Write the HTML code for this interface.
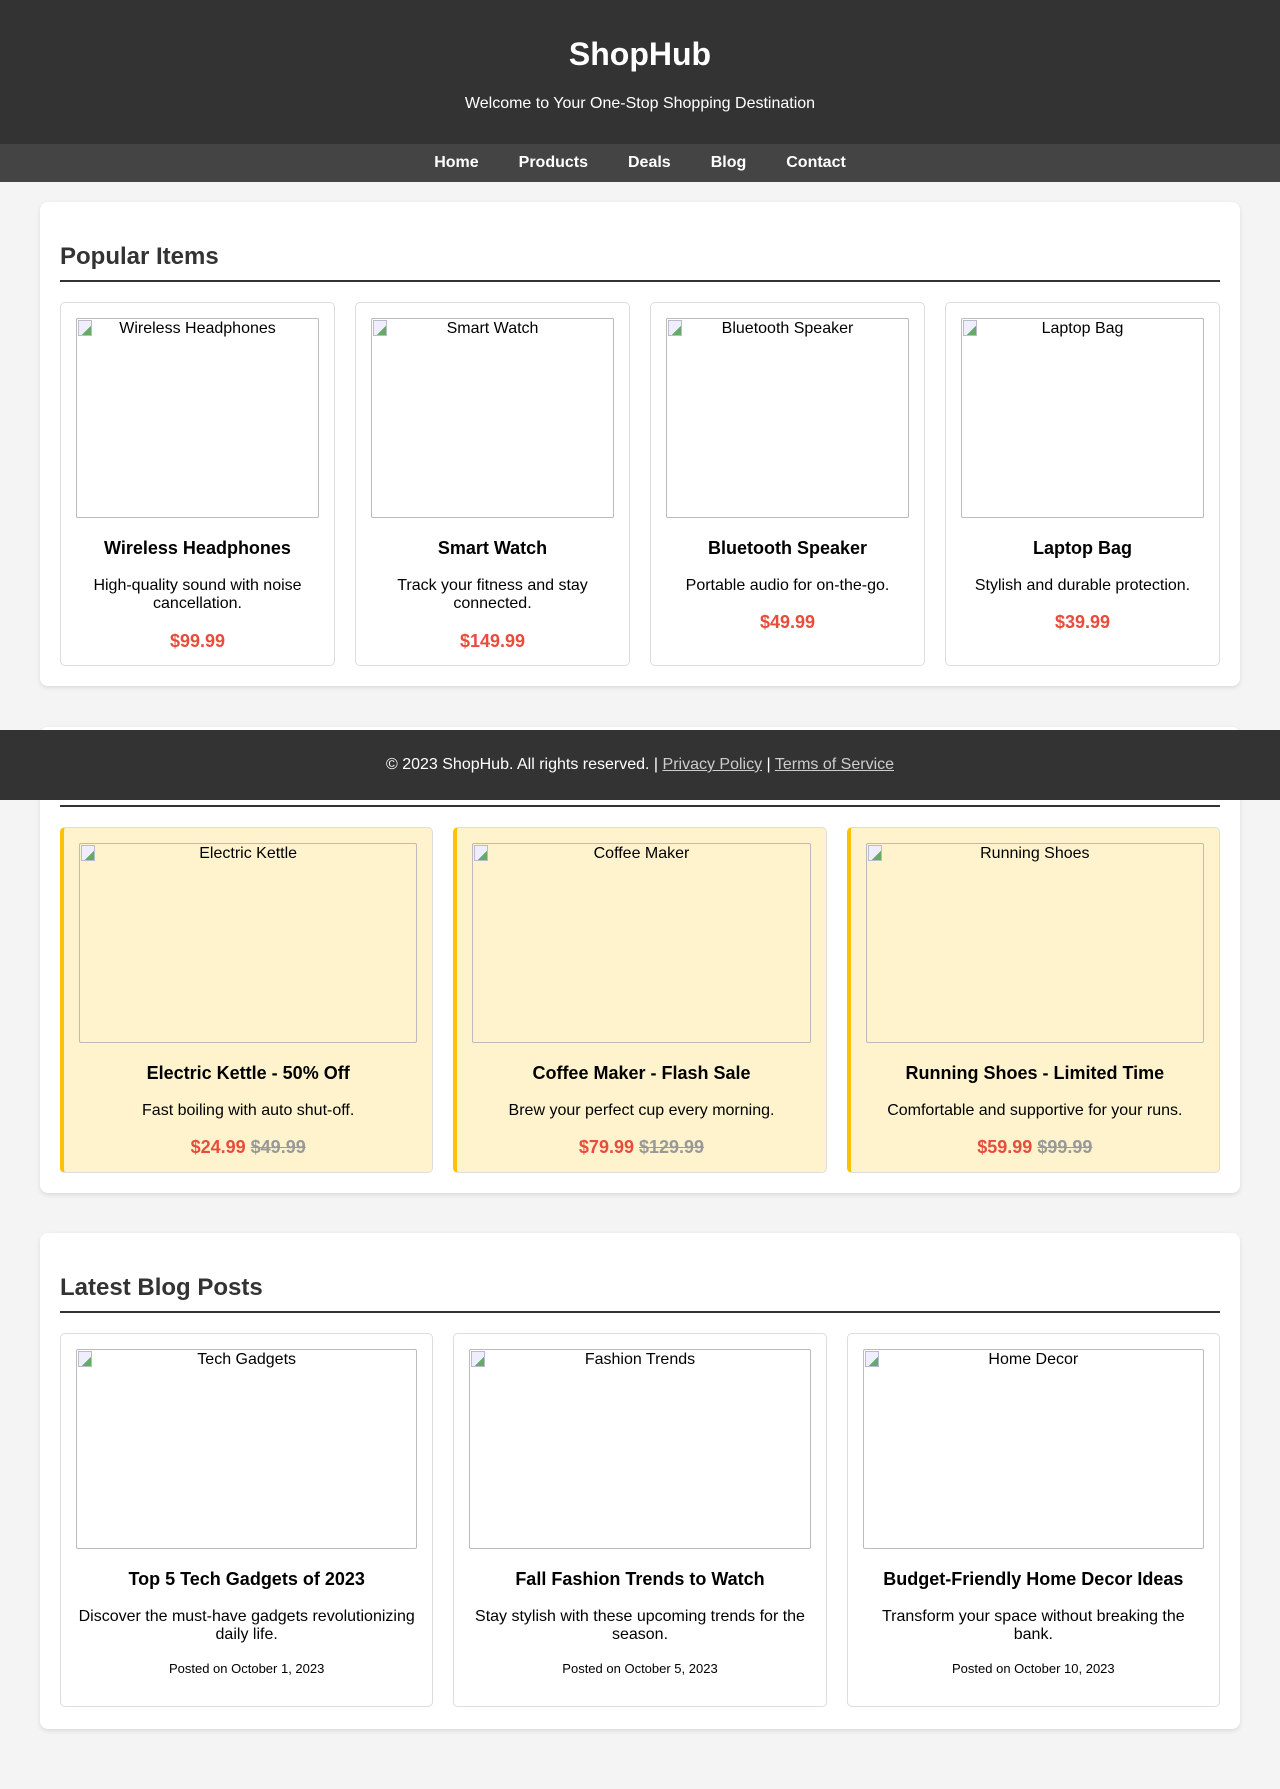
<!DOCTYPE html>
<html><head><meta charset="utf-8"><style>
*{box-sizing:border-box}
body{margin:0;background:#f4f4f4;font-family:"Liberation Sans",Arial,sans-serif;color:#000;height:1789px;position:relative}
header{background:#333;color:#fff;text-align:center;height:144px;padding-top:36px}
header h1{margin:0;font-size:32px;line-height:37px}
header p{margin:22px 0 0;font-size:16px;line-height:18px}
nav{background:#444;height:38px;text-align:center;padding-top:10px}
nav a{color:#fff;font-weight:bold;text-decoration:none;font-size:16px;line-height:18px;margin:0 20px}
.sec{position:absolute;left:40px;width:1200px;background:#fff;border-radius:8px;box-shadow:0 2px 5px rgba(0,0,0,.1);padding:20px}
.sec h2{margin:21px 0 0;font-size:24px;line-height:28px;color:#333;padding-bottom:9px;border-bottom:2px solid #333}
.grid{display:grid;gap:20px;margin-top:20px}
.card{border:1px solid #ddd;border-radius:5px;padding:15px;text-align:center;background:#fff;overflow:hidden}
.img{height:200px;border:1px solid #bbb;border-radius:2px;font-size:16px;line-height:18px;padding-top:1px;position:relative}
.img:before{content:"";position:absolute;left:1px;top:1px;width:12px;height:14px;border:1px solid #bbc;background:linear-gradient(135deg,#eef 65%,#6a6 65%)}
.card h3{margin:20px 0 0;font-size:18px;line-height:21px}
.card .d{margin:18px 0 0;font-size:16px;line-height:18.4px}
.card .p{margin:17px 0 0;font-size:18px;line-height:21px;font-weight:bold;color:#e74c3c}
.card .p s{color:#999}
.deal{background:#fff3cd;border-left:4px solid #ffc107}
.date{font-size:13px;margin:16px 0 0;line-height:15px}
footer{position:absolute;top:730px;left:0;width:1280px;height:70px;background:#333;color:#fff;text-align:center;font-size:16px;line-height:18px;padding-top:26px}
footer a{color:#ccc;text-decoration:underline}
.g1 .card{height:364px}.g2 .card{height:346px}.g3 .card{height:374px}
</style></head><body>
<header><h1>ShopHub</h1><p>Welcome to Your One-Stop Shopping Destination</p></header>
<nav><a>Home</a><a>Products</a><a>Deals</a><a>Blog</a><a>Contact</a></nav>

<div class="sec" style="top:202px;height:484px">
<h2>Popular Items</h2>
<div class="grid g1" style="grid-template-columns:repeat(4,1fr)">
<div class="card"><div class="img">Wireless Headphones</div><h3>Wireless Headphones</h3><p class="d">High-quality sound with noise cancellation.</p><p class="p">$99.99</p></div>
<div class="card"><div class="img">Smart Watch</div><h3>Smart Watch</h3><p class="d">Track your fitness and stay connected.</p><p class="p">$149.99</p></div>
<div class="card"><div class="img">Bluetooth Speaker</div><h3>Bluetooth Speaker</h3><p class="d">Portable audio for on-the-go.</p><p class="p">$49.99</p></div>
<div class="card"><div class="img">Laptop Bag</div><h3>Laptop Bag</h3><p class="d">Stylish and durable protection.</p><p class="p">$39.99</p></div>
</div></div>

<div class="sec" style="top:727px;height:466px">
<h2>Hot Deals</h2>
<div class="grid g2" style="grid-template-columns:repeat(3,1fr)">
<div class="card deal"><div class="img">Electric Kettle</div><h3>Electric Kettle - 50% Off</h3><p class="d">Fast boiling with auto shut-off.</p><p class="p">$24.99 <s>$49.99</s></p></div>
<div class="card deal"><div class="img">Coffee Maker</div><h3>Coffee Maker - Flash Sale</h3><p class="d">Brew your perfect cup every morning.</p><p class="p">$79.99 <s>$129.99</s></p></div>
<div class="card deal"><div class="img">Running Shoes</div><h3>Running Shoes - Limited Time</h3><p class="d">Comfortable and supportive for your runs.</p><p class="p">$59.99 <s>$99.99</s></p></div>
</div></div>

<div class="sec" style="top:1233px;height:496px">
<h2>Latest Blog Posts</h2>
<div class="grid g3" style="grid-template-columns:repeat(3,1fr)">
<div class="card"><div class="img">Tech Gadgets</div><h3>Top 5 Tech Gadgets of 2023</h3><p class="d">Discover the must-have gadgets revolutionizing daily life.</p><p class="date">Posted on October 1, 2023</p></div>
<div class="card"><div class="img">Fashion Trends</div><h3>Fall Fashion Trends to Watch</h3><p class="d">Stay stylish with these upcoming trends for the season.</p><p class="date">Posted on October 5, 2023</p></div>
<div class="card"><div class="img">Home Decor</div><h3>Budget-Friendly Home Decor Ideas</h3><p class="d">Transform your space without breaking the bank.</p><p class="date">Posted on October 10, 2023</p></div>
</div></div>

<footer>© 2023 ShopHub. All rights reserved. | <a>Privacy Policy</a> | <a>Terms of Service</a></footer>
</body></html>
